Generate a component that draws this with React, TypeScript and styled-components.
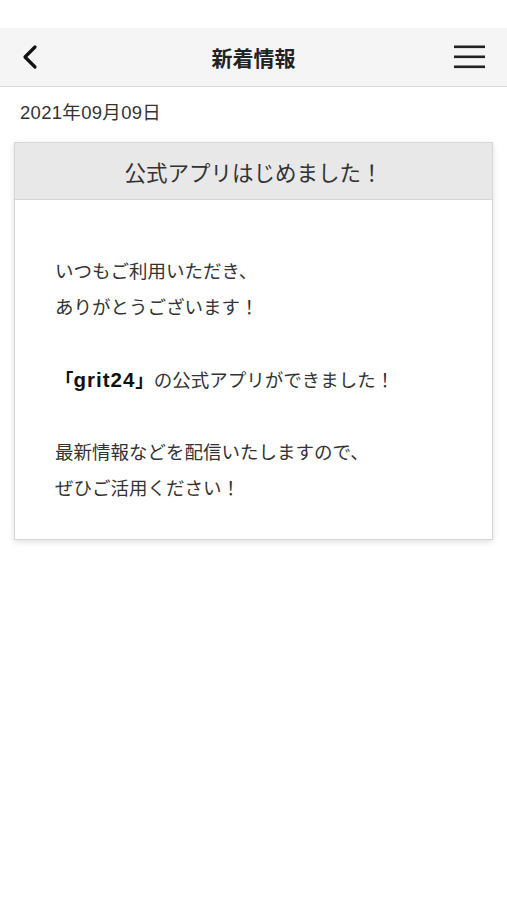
import React from "react";
import styled, { createGlobalStyle } from "styled-components";

const Global = createGlobalStyle`
  html, body { margin: 0; padding: 0; background: #fff; }
  body { font-family: "Liberation Sans", "Noto Sans CJK JP", sans-serif; color: #333; }
`;

const Page = styled.div`
  width: 507px;
  min-height: 900px;
  background: #fff;
  padding-top: 28px;
  box-sizing: border-box;
`;

const Header = styled.header`
  height: 58px;
  background: #f5f5f5;
  border-bottom: 1px solid #d9d9d9;
  display: grid;
  grid-template-columns: 60px 1fr 60px;
  align-items: center;
`;

const IconButton = styled.div<{ $align: "start" | "end" }>`
  display: flex;
  justify-content: ${(p) => (p.$align === "start" ? "flex-start" : "flex-end")};
  padding: ${(p) => (p.$align === "start" ? "0 0 0 20px" : "0 22px 0 0")};
  align-items: center;
`;

const Title = styled.h1`
  margin: 0;
  text-align: center;
  font-size: 21px;
  font-weight: 700;
  color: #222;
`;

const DateText = styled.div`
  padding: 13px 0 0 20px;
  font-size: 18.5px;
  letter-spacing: 0.3px;
  line-height: 26px;
  color: #333;
`;

const Card = styled.section`
  margin: 16px 14px 0 14px;
  border: 1px solid #d6d6d6;
  box-shadow: 0 2px 6px rgba(0, 0, 0, 0.13);
  background: #fff;
`;

const CardHeader = styled.div`
  background: #e8e8e8;
  border-bottom: 1px solid #d4d4d4;
  height: 56px;
  display: flex;
  align-items: center;
  justify-content: center;
  font-size: 21.5px;
  color: #333;
`;

const CardBody = styled.div`
  padding: 54px 20px 32px 40px;
  font-size: 18.5px;
  line-height: 36px;
  color: #333;
`;

const Para = styled.p`
  margin: 0 0 36px 0;
  &:last-child { margin-bottom: 0; }
`;

const Strong = styled.span`
  font-weight: 700;
  color: #111;
`;

const Brand = styled.span`
  font-size: 20.5px;
  letter-spacing: 1px;
`;

const BackIcon = () => (
  <svg width="20" height="26" viewBox="0 0 20 26">
    <path d="M15 3 L5 13 L15 23" fill="none" stroke="#111" strokeWidth="3.2" strokeLinecap="round" strokeLinejoin="round" />
  </svg>
);

const MenuIcon = () => (
  <svg width="31" height="24" viewBox="0 0 31 24">
    <rect x="0" y="0.5" width="31" height="2.6" fill="#222" />
    <rect x="0" y="10.5" width="31" height="2.6" fill="#222" />
    <rect x="0" y="20.5" width="31" height="2.6" fill="#222" />
  </svg>
);

export default function App() {
  return (
    <>
      <Global />
      <Page>
        <Header>
          <IconButton $align="start">
            <BackIcon />
          </IconButton>
          <Title>新着情報</Title>
          <IconButton $align="end">
            <MenuIcon />
          </IconButton>
        </Header>
        <DateText>2021年09月09日</DateText>
        <Card>
          <CardHeader>公式アプリはじめました！</CardHeader>
          <CardBody>
            <Para>
              いつもご利用いただき、
              <br />
              ありがとうございます！
            </Para>
            <Para>
              <Strong>
                「<Brand>grit24</Brand>」
              </Strong>
              の公式アプリができました！
            </Para>
            <Para>
              最新情報などを配信いたしますので、
              <br />
              ぜひご活用ください！
            </Para>
          </CardBody>
        </Card>
      </Page>
    </>
  );
}
